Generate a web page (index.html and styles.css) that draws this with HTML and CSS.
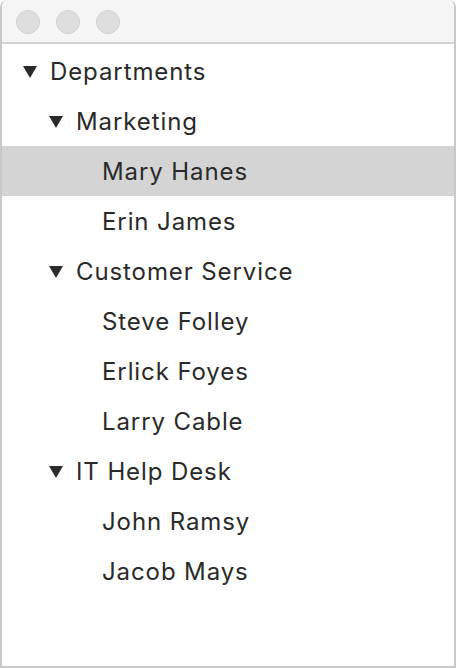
FILE: index.html
```html
<!DOCTYPE html>
<html>
<head>
<meta charset="utf-8">
<link rel="stylesheet" href="styles.css">
</head>
<body>
<div class="window">
  <div class="titlebar">
    <span class="light"></span>
    <span class="light"></span>
    <span class="light"></span>
  </div>
  <div class="tree">
    <div class="row lvl0"><span class="tri"></span><span class="label">Departments</span></div>
    <div class="row lvl1"><span class="tri"></span><span class="label">Marketing</span></div>
    <div class="row lvl2 selected"><span class="label">Mary Hanes</span></div>
    <div class="row lvl2"><span class="label">Erin James</span></div>
    <div class="row lvl1"><span class="tri"></span><span class="label">Customer Service</span></div>
    <div class="row lvl2"><span class="label">Steve Folley</span></div>
    <div class="row lvl2"><span class="label">Erlick Foyes</span></div>
    <div class="row lvl2"><span class="label">Larry Cable</span></div>
    <div class="row lvl1"><span class="tri"></span><span class="label">IT Help Desk</span></div>
    <div class="row lvl2"><span class="label">John Ramsy</span></div>
    <div class="row lvl2"><span class="label">Jacob Mays</span></div>
  </div>
</div>
</body>
</html>
```
FILE: styles.css
```css
html, body {
  margin: 0;
  padding: 0;
  background: #ffffff;
}
.window {
  width: 456px;
  height: 668px;
  box-sizing: border-box;
  display: flex;
  flex-direction: column;
  border: 2px solid #c8c8c8;
  border-top: none;
  border-radius: 7px 7px 0 0;
  overflow: hidden;
  font-family: Inter, "Liberation Sans", Arial, sans-serif;
}
.titlebar {
  height: 44px;
  flex: 0 0 44px;
  box-sizing: border-box;
  margin: 0 -2px;
  background: #f5f5f5;
  border-bottom: 2px solid #d2d2d2;
  border-radius: 7px 7px 0 0;
  display: flex;
  align-items: center;
  gap: 16px;
  padding-left: 16px;
  padding-top: 2px;
}
.light {
  width: 24px;
  height: 24px;
  box-sizing: border-box;
  border-radius: 50%;
  background: #dedede;
  border: 1px solid #d0d0d0;
}
.tree {
  flex: 1;
  padding-top: 2px;
  background: #fff;
}
.row {
  height: 50px;
  display: flex;
  align-items: center;
  font-size: 24px;
  color: #2a2a2a;
  letter-spacing: 0.9px;
}
.row.selected {
  background: #d4d4d4;
}
.lvl0 { padding-left: 21px; }
.lvl1 { padding-left: 47px; }
.lvl2 { padding-left: 100px; }
.tri {
  width: 0;
  height: 0;
  border-left: 7px solid transparent;
  border-right: 7px solid transparent;
  border-top: 12px solid #2a2a2a;
  margin-right: 13px;
  margin-top: 1px;
}
```
